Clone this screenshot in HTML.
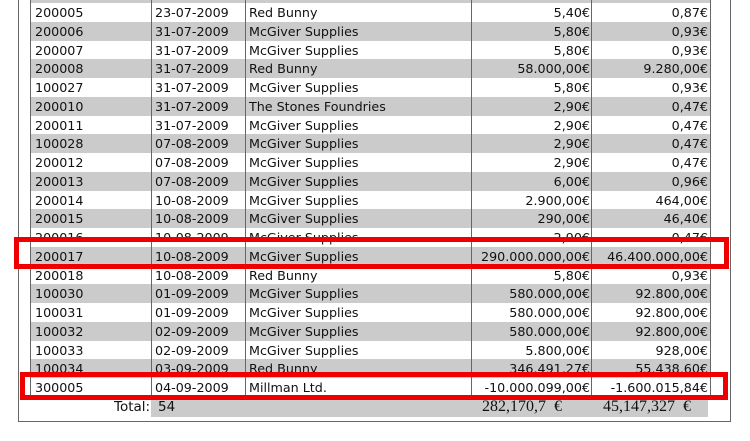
<!DOCTYPE html>
<html><head><style>
body{margin:0;width:750px;height:441px;background:#fff;overflow:hidden;position:relative;font-family:"DejaVu Sans","Liberation Sans",sans-serif;font-size:12.7px;color:#111}
.frame{position:absolute;left:18px;top:-2px;width:711px;height:423px;border:1px solid #666;border-top:none}
.row{position:absolute;left:31px;width:679px;height:18.75px;line-height:19.5px;overflow:hidden}
.g{background:#cbcbcb}
.row span{position:absolute;top:0;white-space:nowrap}
.c1{left:4px}.c2{left:124px}.c3{left:218px}
.c4{right:120px}.c5{right:2px}
.vl{position:absolute;top:0;width:1px;height:397px;background:#666}
.red{position:absolute;border:5px solid #e00}
</style></head><body>
<div class="frame"></div>
<div class="row g" style="top:-15.75px"></div>
<div id="rows"></div>
<script>
var d=[["200005","23-07-2009","Red Bunny","5,40€","0,87€"],
["200006","31-07-2009","McGiver Supplies","5,80€","0,93€"],
["200007","31-07-2009","McGiver Supplies","5,80€","0,93€"],
["200008","31-07-2009","Red Bunny","58.000,00€","9.280,00€"],
["100027","31-07-2009","McGiver Supplies","5,80€","0,93€"],
["200010","31-07-2009","The Stones Foundries","2,90€","0,47€"],
["200011","31-07-2009","McGiver Supplies","2,90€","0,47€"],
["100028","07-08-2009","McGiver Supplies","2,90€","0,47€"],
["200012","07-08-2009","McGiver Supplies","2,90€","0,47€"],
["200013","07-08-2009","McGiver Supplies","6,00€","0,96€"],
["200014","10-08-2009","McGiver Supplies","2.900,00€","464,00€"],
["200015","10-08-2009","McGiver Supplies","290,00€","46,40€"],
["200016","10-08-2009","McGiver Supplies","2,90€","0,47€"],
["200017","10-08-2009","McGiver Supplies","290.000.000,00€","46.400.000,00€"],
["200018","10-08-2009","Red Bunny","5,80€","0,93€"],
["100030","01-09-2009","McGiver Supplies","580.000,00€","92.800,00€"],
["100031","01-09-2009","McGiver Supplies","580.000,00€","92.800,00€"],
["100032","02-09-2009","McGiver Supplies","580.000,00€","92.800,00€"],
["100033","02-09-2009","McGiver Supplies","5.800,00€","928,00€"],
["100034","03-09-2009","Red Bunny","346.491,27€","55.438,60€"],
["300005","04-09-2009","Millman Ltd.","-10.000.099,00€","-1.600.015,84€"]];
var h="";d.forEach(function(r,i){h+='<div class="row'+(i%2?' g':'')+'" style="top:'+(3+i*18.75)+'px"><span class="c1">'+r[0]+'</span><span class="c2">'+r[1]+'</span><span class="c3">'+r[2]+'</span><span class="c4">'+r[3]+'</span><span class="c5">'+r[4]+'</span></div>';});
document.getElementById("rows").innerHTML=h;
</script>
<div class="vl" style="left:30px"></div>
<div class="vl" style="left:151px"></div>
<div class="vl" style="left:245px"></div>
<div class="vl" style="left:471px"></div>
<div class="vl" style="left:591px"></div>
<div class="vl" style="left:710px"></div>
<div style="position:absolute;left:151px;top:397px;width:557px;height:20px;background:#cbcbcb"></div>
<div style="position:absolute;left:114px;top:399px;font-size:13.5px">Total:</div>
<div style="position:absolute;left:158px;top:399px;font-size:13.5px">54</div>
<div style="position:absolute;left:482px;top:398px;font-family:'Liberation Serif',serif;font-size:16px">282,170,7 &nbsp;€</div>
<div style="position:absolute;left:603px;top:398px;font-family:'Liberation Serif',serif;font-size:16px">45,147,327 &nbsp;€</div>
<div class="red" style="left:14px;top:237px;width:705px;height:22px"></div>
<div class="red" style="left:20px;top:372px;width:698px;height:18px"></div>
</body></html>
